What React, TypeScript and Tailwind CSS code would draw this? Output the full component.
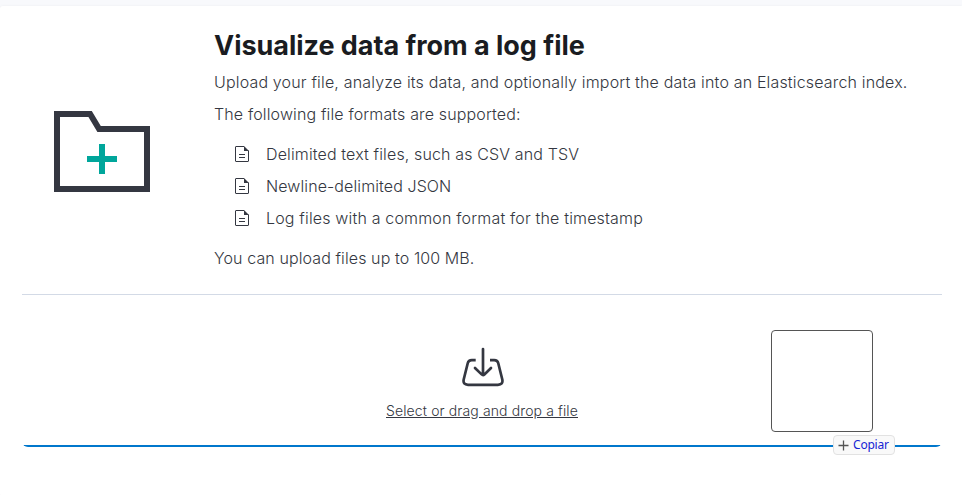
import React from "react";

const formats = [
  { label: "Delimited text files, such as CSV and TSV", tracking: "tracking-[0.135px]" },
  { label: "Newline-delimited JSON", tracking: "tracking-[0.1px]" },
  { label: "Log files with a common format for the timestamp", tracking: "tracking-[0.17px]" },
];

function FolderIcon() {
  return (
    <svg width="96" height="81" viewBox="0 0 96 81" fill="none">
      <path d="M3 3H36.1L45.1 18H93V78H3Z" stroke="#343741" strokeWidth="6" />
      <path d="M45 33h6v12h12v6H51v12h-6V51H33v-6h12z" fill="#00A69B" />
    </svg>
  );
}

function DocumentIcon() {
  return (
    <svg width="16" height="16" viewBox="0 0 16 16" fill="none" className="shrink-0">
      <path d="M10 .5H2a.5.5 0 0 0-.5.5v14a.5.5 0 0 0 .5.5h12a.5.5 0 0 0 .5-.5V4.6" stroke="#343741" />
      <path d="M10 0L15 5H10Z" fill="#343741" />
      <path d="M5 8.5h6M5 11.5h6" stroke="#343741" />
    </svg>
  );
}

function ImportIcon() {
  return (
    <svg width="42" height="40" viewBox="0 0 42 40" fill="none" stroke="#343741" strokeWidth="2.7" strokeLinecap="round" strokeLinejoin="round" className="ml-0.5">
      <path d="M13.7 13.2H9.8Q6.5 13.2 5.8 16L1.7 32.5Q0.7 37.8 6 37.8H36Q41.3 37.8 40.3 32.5L36.2 16Q35.5 13.2 32.2 13.2H28" strokeLinecap="butt" />
      <path d="M21 2V28M13 21L19.6 27.4Q21 28.7 22.4 27.4L29 21" />
    </svg>
  );
}

export default function App() {
  return (
    <div className="h-[495px] overflow-hidden bg-[#f8f9fc] pt-1.5 font-['Inter',sans-serif] text-[#343741]">
      <main className="h-[490px] rounded-l-[3px] bg-white px-[22px] pt-6 shadow-[0_0_3px_rgba(0,0,0,0.05)]">
        <section className="flex h-[264px]">
          <div className="w-48 pl-8 pt-[81px]">
            <FolderIcon />
          </div>
          <div className="whitespace-nowrap text-base font-light">
            <h1 className="text-[27px] font-bold leading-8 tracking-[-0.03px] text-[#1a1c21]">Visualize data from a log file</h1>
            <p className="mt-2 leading-6 tracking-[0.165px]">
              Upload your file, analyze its data, and optionally import the data into an Elasticsearch index.
            </p>
            <p className="mt-2 leading-6 tracking-[0.14px]">The following file formats are supported:</p>
            <ul className="mt-4 flex flex-col gap-2 pl-5">
              {formats.map(({ label, tracking }) => (
                <li key={label} className="flex items-center gap-4 leading-6">
                  <DocumentIcon />
                  <span className={tracking}>{label}</span>
                </li>
              ))}
            </ul>
            <p className="mt-4 leading-6 tracking-[0.1px]">You can upload files up to 100 MB.</p>
          </div>
        </section>
        <hr className="w-[920px] border-[#d3dae6]" />
        <div className="relative mt-6 flex h-32 w-[920px] flex-col items-center rounded-md bg-[linear-gradient(to_top,#0077cc_2px,transparent_2px)] pt-7">
          <ImportIcon />
          <span className="mt-3 whitespace-nowrap text-sm font-light leading-6 tracking-[0.12px] underline">
            Select or drag and drop a file
          </span>
          <div className="absolute left-[749px] top-[11px] size-[102px] rounded border border-[#555555] bg-white" />
          <div className="absolute left-[811px] top-[116px] flex h-5 w-[62px] items-center rounded border border-[#e2e2e2] bg-[#f9f9f9] pl-1 font-['Noto_Sans',sans-serif] text-xs tracking-[-0.2px] text-[#1524d4]">
            <svg width="11" height="11" viewBox="0 0 11 11" className="mr-1 shrink-0">
              <path d="M5.5 0.5v10M.5 5.5h10" stroke="#555" strokeWidth="1.3" />
            </svg>
            Copiar
          </div>
        </div>
      </main>
    </div>
  );
}
